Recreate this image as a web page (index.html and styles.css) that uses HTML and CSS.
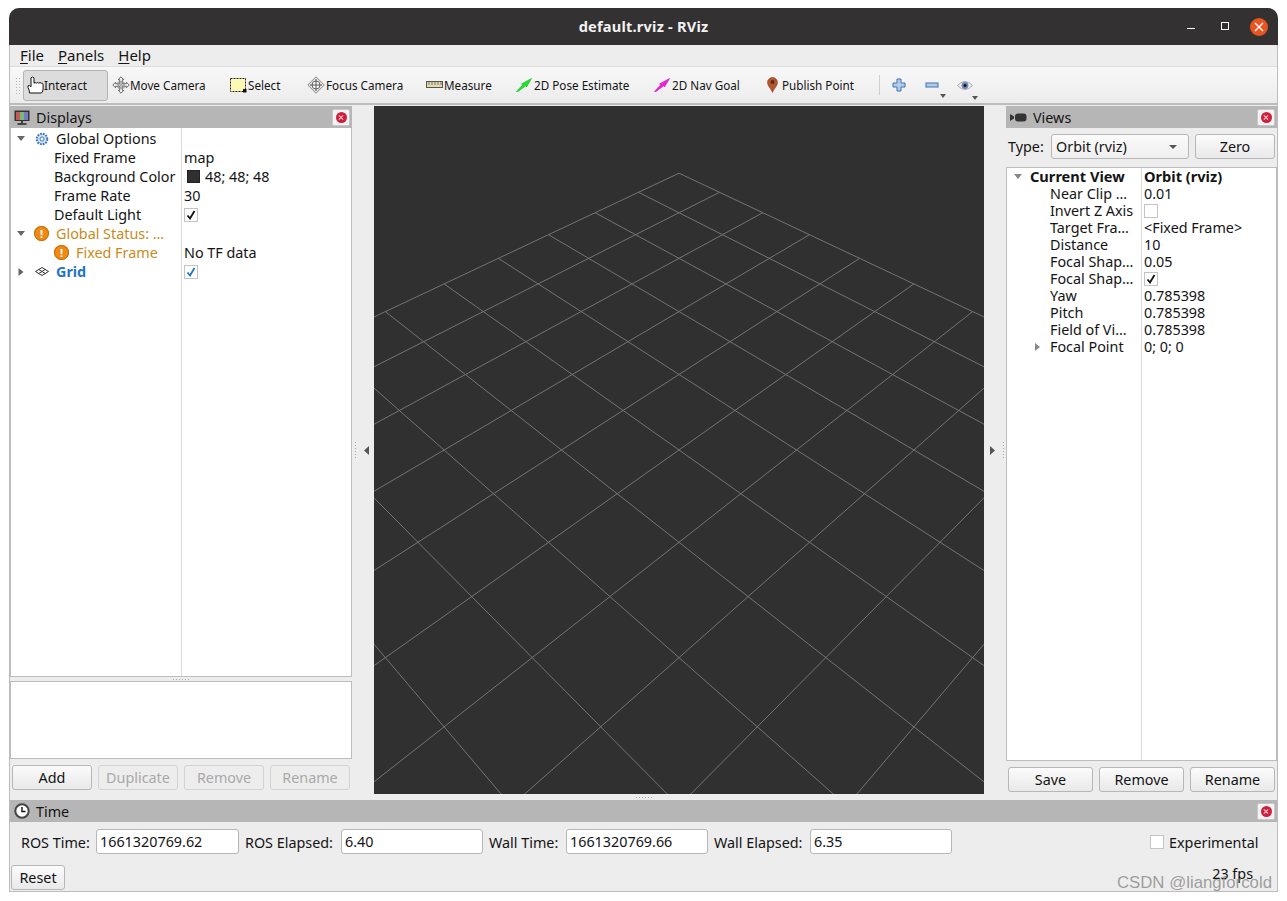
FILE: index.html
```html
<!DOCTYPE html>
<html lang="en">
<head>
<meta charset="utf-8">
<title>default.rviz - RViz</title>
<link rel="stylesheet" href="styles.css">
</head>
<body>
<div class="window">
  <header class="titlebar">
    <div class="title-side"></div>
    <div class="title">default.rviz - RViz</div>
    <div class="title-side controls">
      <span class="win-min"></span>
      <span class="win-max"></span>
      <span class="win-close"><svg width="10" height="10" viewBox="0 0 10 10"><path d="M1 1L9 9M9 1L1 9" stroke="#fff" stroke-width="1.4"/></svg></span>
    </div>
  </header>
  <nav class="menubar">
    <span class="menu"><u>F</u>ile</span>
    <span class="menu"><u>P</u>anels</span>
    <span class="menu"><u>H</u>elp</span>
  </nav>
  <div class="toolbar">
    <span class="grip"></span>
    <div class="tools">
      <div class="tool active">
        <svg width="17" height="18" viewBox="0 0 17 18"><path d="M2.5 17Q2.6 14 1 11.5Q.2 9 2.6 9.6L4 10.8V1.8Q5.5 .2 7 1.8V7.2Q8.2 5.8 9.4 7.2Q10.6 5.8 11.8 7.2Q13 5.8 14.2 7.2Q15.9 6.6 16.1 8.6V13Q16 17 14 17Z" fill="#fff" stroke="#111" stroke-width="1"/></svg>
        <span>Interact</span>
      </div>
      <div class="tool">
        <svg width="18" height="18" viewBox="0 0 18 18"><path d="M9 .8L11.8 3.6H10.3V7.7H14.4V6.2L17.2 9L14.4 11.8V10.3H10.3V14.4H11.8L9 17.2L6.2 14.4H7.7V10.3H3.6V11.8L.8 9L3.6 6.2V7.7H7.7V3.6H6.2Z" fill="#f4f4f4" stroke="#666" stroke-width="1"/><path d="M6 6H12V12H6ZM9 5V13M5 9H13" fill="none" stroke="#999" stroke-width="1"/></svg>
        <span>Move Camera</span>
      </div>
      <div class="tool">
        <svg width="17" height="15" viewBox="0 0 17 15"><rect x="0.5" y="0.5" width="15" height="13" fill="#fdf8b4" stroke="#222" stroke-dasharray="2 1"/><rect x="13" y="11" width="3.5" height="3.5" fill="#111"/></svg>
        <span>Select</span>
      </div>
      <div class="tool">
        <svg width="18" height="18" viewBox="0 0 18 18"><path d="M9 .8L17.2 9L9 17.2L.8 9Z" fill="#e6e6e6" stroke="#888"/><circle cx="9" cy="9" r="4" fill="#fff" stroke="#666"/><path d="M9 3V15M3 9H15" stroke="#555"/></svg>
        <span>Focus Camera</span>
      </div>
      <div class="tool">
        <svg width="17" height="8" viewBox="0 0 17 8"><rect x="0.5" y="0.5" width="16" height="6" fill="#e4dca6" stroke="#555"/><path d="M3 1V4M6 1V4M9 1V4M12 1V4M15 1V4" stroke="#777"/></svg>
        <span>Measure</span>
      </div>
      <div class="tool tool-gap">
        <svg width="16" height="14" viewBox="0 0 16 14"><path d="M0.5 13.5L7 6.5L5.5 6L15.5 0.5L10.5 9L10 7.5L2 13.5Z" fill="#1fe52a" stroke="#0fb81f" stroke-width="0.6"/></svg>
        <span>2D Pose Estimate</span>
      </div>
      <div class="tool tool-gap">
        <svg width="16" height="14" viewBox="0 0 16 14"><path d="M0.5 13.5L7 6.5L5.5 6L15.5 0.5L10.5 9L10 7.5L2 13.5Z" fill="#f01fe0" stroke="#c810b8" stroke-width="0.6"/></svg>
        <span>2D Nav Goal</span>
      </div>
      <div class="tool tool-pin">
        <svg width="11" height="16" viewBox="0 0 11 16"><path d="M5.5 15.5C4 11.5 0.5 9 0.5 5.5A5 5 0 0 1 10.5 5.5C10.5 9 7 11.5 5.5 15.5Z" fill="#b4552f" stroke="#8a4a2a" stroke-width="0.6"/><circle cx="5.5" cy="5" r="1.9" fill="#5a2a16"/></svg>
        <span>Publish Point</span>
      </div>
    </div>
    <span class="tool-sep"></span>
    <svg class="tb-plus" width="14" height="14" viewBox="0 0 14 14"><path d="M5 1H9V5H13V9H9V13H5V9H1V5H5Z" fill="#b3cbe8" stroke="#3f72b0"/></svg>
    <span class="tb-drop tb-minus">
      <svg width="14" height="6" viewBox="0 0 14 6"><rect x="1" y="1" width="12" height="4" fill="#b3cbe8" stroke="#3f72b0"/></svg>
      <i class="drop-tri"></i>
    </span>
    <span class="tb-drop tb-eye">
      <svg width="16" height="11" viewBox="0 0 16 11"><path d="M0.5 5.5Q8 -2.5 15.5 5.5Q8 13.5 0.5 5.5Z" fill="#eceff4" stroke="#aaa"/><circle cx="8" cy="5.5" r="3.4" fill="#6d84bb"/><circle cx="8" cy="5.5" r="1.5" fill="#111"/></svg>
      <i class="drop-tri"></i>
    </span>
  </div>

  <main class="workspace">
    <section class="dock displays">
      <div class="dock-head">
        <svg width="16" height="15" viewBox="0 0 16 15"><rect x="0.5" y="0.5" width="15" height="10.5" fill="#333"/><rect x="2" y="2" width="4" height="8" fill="#c45a5a"/><rect x="6" y="2" width="4" height="8" fill="#78b878"/><rect x="10" y="2" width="4" height="8" fill="#7a78c0"/><path d="M8 11V13M3.5 14H12.5" stroke="#222" stroke-width="1.6"/></svg>
        <span class="dock-title">Displays</span>
        <span class="dock-close"><i></i></span>
      </div>
      <div class="tree tree-displays">
        <div class="row"><div class="name top"><svg class="arr" width="8" height="5" viewBox="0 0 8 5"><path d="M0 0H8L4 5Z" fill="#666"/></svg>
          <svg class="ico" width="14" height="14" viewBox="0 0 14 14"><circle cx="7" cy="7" r="5.3" fill="#cfe0f4" stroke="#3f78c0" stroke-width="2" stroke-dasharray="1.8 1"/><circle cx="7" cy="7" r="2" fill="#fff" stroke="#3f78c0"/></svg>
          <span>Global Options</span></div><div class="val"></div></div>
        <div class="row"><div class="name child">Fixed Frame</div><div class="val">map</div></div>
        <div class="row"><div class="name child">Background Color</div><div class="val"><i class="swatch"></i>48; 48; 48</div></div>
        <div class="row"><div class="name child">Frame Rate</div><div class="val">30</div></div>
        <div class="row"><div class="name child">Default Light</div><div class="val"><span class="check on"><svg width="10" height="10" viewBox="0 0 10 10"><path d="M1.5 5.5L4 8.5L8.5 1"/></svg></span></div></div>
        <div class="row warn"><div class="name top"><svg class="arr" width="8" height="5" viewBox="0 0 8 5"><path d="M0 0H8L4 5Z" fill="#666"/></svg>
          <span class="warn-ico">!</span>
          <span>Global Status: …</span></div><div class="val"></div></div>
        <div class="row"><div class="name warn-child"><span class="warn-ico">!</span><span class="warn-text">Fixed Frame</span></div><div class="val">No TF data</div></div>
        <div class="row"><div class="name top"><svg class="arr" width="5" height="8" viewBox="0 0 5 8"><path d="M0 0V8L5 4Z" fill="#666"/></svg>
          <svg class="ico ico-grid" width="14" height="9" viewBox="0 0 14 9"><path d="M7 .5L13.5 4.5L7 8.5L.5 4.5ZM3.8 2.5L10.2 6.5M10.2 2.5L3.8 6.5" fill="none" stroke="#333"/></svg>
          <span class="grid-name">Grid</span></div><div class="val"><span class="check on blue"><svg width="10" height="10" viewBox="0 0 10 10"><path d="M1.5 5.5L4 8.5L8.5 1"/></svg></span></div></div>
      </div>
      <div class="split"><i class="dots-h"></i></div>
      <div class="desc"></div>
      <div class="btns btns-left">
        <button class="btn">Add</button>
        <button class="btn off">Duplicate</button>
        <button class="btn off">Remove</button>
        <button class="btn off">Rename</button>
      </div>
    </section>

    <div class="gutter gutter-l"><i class="dots-v"></i><svg width="5" height="9" viewBox="0 0 5 9"><path d="M5 0V9L0 4.5Z" fill="#555"/></svg></div>

    <section class="center">
      <svg class="scene" width="610" height="688" viewBox="374 106 610 688">
        <rect x="374" y="106" width="610" height="688" fill="#303030"/>
        <g stroke="#747474" stroke-width="1" fill="none">
          <path d="M679 173.2L91.7 450M719.5 192.3L122.6 493.7M762.9 212.7L157 542.3M809.5 234.7L195.3 596.6M859.7 258.3L238.5 657.6M913.9 283.9L287.5 726.8M972.7 311.6L343.4 805.9M1036.5 341.7L407.9 897.2M1106.1 374.5L483.2 1003.7M1182.4 410.5L572.2 1129.5M1266.3 450L679 1280.5"/>
          <path d="M679 173.2L1266.3 450M638.5 192.3L1235.4 493.7M595.1 212.7L1201 542.3M548.5 234.7L1162.7 596.6M498.3 258.3L1119.5 657.6M444.1 283.9L1070.5 726.8M385.3 311.6L1014.6 805.9M321.5 341.7L950.1 897.2M251.9 374.5L874.8 1003.7M175.6 410.5L785.8 1129.5M91.7 450L679 1280.5"/>
        </g>
      </svg>
      <div class="split-center"><i class="dots-h"></i></div>
    </section>

    <div class="gutter gutter-r"><svg width="5" height="9" viewBox="0 0 5 9"><path d="M0 0V9L5 4.5Z" fill="#555"/></svg><i class="dots-v"></i></div>

    <section class="dock views">
      <div class="dock-head">
        <svg width="17" height="9" viewBox="0 0 17 9"><path d="M0 1L4 3.5V5.5L0 8Z" fill="#333"/><rect x="5" y="0.5" width="11.5" height="8" rx="3" fill="#333"/></svg>
        <span class="dock-title">Views</span>
        <span class="dock-close"><i></i></span>
      </div>
      <div class="type-row">
        <span class="type-label">Type:</span>
        <div class="combo"><span>Orbit (rviz)</span><i class="combo-tri"></i></div>
        <button class="btn zero">Zero</button>
      </div>
      <div class="tree tree-views">
        <div class="row"><div class="name vtop"><svg class="arr" width="8" height="5" viewBox="0 0 8 5"><path d="M0 0H8L4 5Z" fill="#888"/></svg><b>Current View</b></div><div class="val"><b>Orbit (rviz)</b></div></div>
        <div class="row"><div class="name vchild">Near Clip …</div><div class="val">0.01</div></div>
        <div class="row"><div class="name vchild">Invert Z Axis</div><div class="val"><span class="check"></span></div></div>
        <div class="row"><div class="name vchild">Target Fra…</div><div class="val">&lt;Fixed Frame&gt;</div></div>
        <div class="row"><div class="name vchild">Distance</div><div class="val">10</div></div>
        <div class="row"><div class="name vchild">Focal Shap…</div><div class="val">0.05</div></div>
        <div class="row"><div class="name vchild">Focal Shap…</div><div class="val"><span class="check on"><svg width="10" height="10" viewBox="0 0 10 10"><path d="M1.5 5.5L4 8.5L8.5 1"/></svg></span></div></div>
        <div class="row"><div class="name vchild">Yaw</div><div class="val">0.785398</div></div>
        <div class="row"><div class="name vchild">Pitch</div><div class="val">0.785398</div></div>
        <div class="row"><div class="name vchild">Field of Vi…</div><div class="val">0.785398</div></div>
        <div class="row"><div class="name vsub"><svg class="arr" width="5" height="8" viewBox="0 0 5 8"><path d="M0 0V8L5 4Z" fill="#888"/></svg>Focal Point</div><div class="val">0; 0; 0</div></div>
      </div>
      <div class="btns btns-right">
        <button class="btn">Save</button>
        <button class="btn">Remove</button>
        <button class="btn">Rename</button>
      </div>
    </section>
  </main>

  <section class="time">
    <div class="dock-head">
      <svg width="16" height="16" viewBox="0 0 16 16"><circle cx="8" cy="8" r="6.7" fill="#fff" stroke="#444" stroke-width="2"/><path d="M8 4V8.5H11.5" fill="none" stroke="#111" stroke-width="1.4"/></svg>
      <span class="dock-title">Time</span>
      <span class="dock-close"><i></i></span>
    </div>
    <div class="time-row">
      <label class="tlabel first">ROS Time:</label><div class="field">1661320769.62</div>
      <label class="tlabel">ROS Elapsed:</label><div class="field">6.40</div>
      <label class="tlabel">Wall Time:</label><div class="field">1661320769.66</div>
      <label class="tlabel">Wall Elapsed:</label><div class="field">6.35</div>
      <div class="experimental"><span class="check"></span><span>Experimental</span></div>
    </div>
    <div class="status-row">
      <button class="btn reset">Reset</button>
      <span class="fps">23 fps</span>
    </div>
  </section>
  <div class="watermark">CSDN @liangforcold</div>
</div>
</body>
</html>
```

FILE: styles.css
```css
* { box-sizing: border-box; }
html, body { margin: 0; padding: 0; background: #fff; }
body {
  padding: 8px 9px 0;
  width: 1287px;
  height: 901px;
  overflow: hidden;
  font-family: "Noto Sans", "Open Sans", sans-serif;
  font-size: 14.35px;
  color: #141414;
}
b { font-size: 14.6px; }
.window {
  position: relative;
  width: 1269px;
  height: 884px;
  background: #ededed;
  border: 1px solid #bdbdbd;
  border-top: 0;
  border-radius: 10px 10px 0 0;
  display: flex;
  flex-direction: column;
}

/* title bar */
.titlebar {
  height: 37px;
  margin: 0 -1px;
  flex: none;
  background: #333131;
  border-radius: 10px 10px 0 0;
  display: flex;
  align-items: center;
  color: #f2f2f2;
}
.title { font-weight: 700; font-size: 14.6px; letter-spacing: 0.2px; padding-bottom: 2px; }
.title-side { flex: 1 1 0; min-width: 0; }
.controls { display: flex; align-items: center; justify-content: flex-end; height: 100%; }
.win-min { width: 8px; height: 1px; background: #fff; margin-top: 3px; }
.win-max { width: 8px; height: 8px; border: 1px solid #fff; margin-left: 26px; margin-top: -1px; }
.win-close { width: 18px; height: 18px; border-radius: 50%; background: #e95420; margin: 0 10px 0 21px; display: flex; align-items: center; justify-content: center; }

/* menu */
.menubar {
  height: 22px;
  flex: none;
  display: flex;
  align-items: center;
  padding: 0 0 2px 10px;
  gap: 14px;
  font-size: 15px;
  background: #ededed;
  border-bottom: 1px solid #dcdcdc;
}
.menu u { text-underline-offset: 2px; }

/* toolbar */
.toolbar {
  height: 38px;
  flex: none;
  display: flex;
  align-items: center;
  position: relative;
  padding-left: 5px;
  background: linear-gradient(#f8f8f8, #ececec);
  border-bottom: 2px solid #bcbcbc;
  font-size: 11.7px;
}
.grip { width: 5px; height: 17px; margin-right: 3px; background-image: radial-gradient(#b4b4b4 0.6px, transparent 0.8px); background-size: 3px 3px; }
.tools { display: grid; grid-template-columns: 85px 118px 77px 119px 90px 138px 113px 112px; height: 31px; }
.tool { display: flex; align-items: center; gap: 0; padding-left: 3px; border: 1px solid transparent; border-radius: 3px; }
.tool.active { background: #dcdcdc; border-color: #b3b3b3; }
.tool svg { flex: none; }
.tool:nth-child(3), .tool:nth-child(4), .tool:nth-child(5) { gap: 1px; }
.tool-gap { gap: 2px; }
.tool-pin { gap: 4px; }
.tool-sep { width: 1px; height: 20px; background: #cfcfcf; margin-left: 4px; }
.tb-plus { margin-left: 12px; }
.tb-drop { position: relative; display: flex; align-items: center; }
.tb-minus { margin-left: 19px; }
.tb-eye { margin-left: 18px; }
.drop-tri { position: absolute; right: -7px; bottom: -10px; width: 0; height: 0; border: 3px solid transparent; border-top: 4px solid #555; border-bottom: 0; }
.tb-eye .drop-tri { right: -5px; bottom: -9px; }

/* workspace */
.workspace { height: 695px; flex: none; display: flex; padding-top: 1px; }
.dock { display: flex; flex-direction: column; flex: none; }
.displays { width: 342px; }
.views { width: 271px; }
.dock-head {
  height: 22px;
  flex: none;
  display: flex;
  align-items: center;
  background: #b6b6b6;
  padding: 0 2px 0 4px;
}
.dock-title { margin-left: 6px; flex: 1; }
.dock-close {
  width: 18px; height: 17px;
  border-radius: 2px;
  background: #f3f3f3;
  border: 1px solid #c8c8c8;
  display: flex; align-items: center; justify-content: center;
}
.dock-close i {
  width: 11px; height: 11px; border-radius: 50%;
  background: #cf1f3e;
  position: relative;
}
.dock-close i::before, .dock-close i::after {
  content: ""; position: absolute; left: 2.5px; top: 5px; width: 6px; height: 1px; background: #f5c8d0;
}
.dock-close i::before { transform: rotate(45deg); }
.dock-close i::after { transform: rotate(-45deg); }

/* trees */
.tree { background: #fff; border: 1px solid #bdbdbd; }
.tree-displays {
  height: 549px;
  border-top: 0;
  padding-top: 1px;
  background: #fff linear-gradient(#dcdcdc, #dcdcdc) 170px 0 / 1px 100% no-repeat;
}
.tree-displays .row { height: 19px; line-height: 19px; display: grid; grid-template-columns: 171px 1fr; align-items: center; }
.tree-displays .val { padding-left: 2px; display: flex; align-items: center; }
.name { display: flex; align-items: center; white-space: nowrap; position: relative; }
.arr { flex: none; }
.top { padding-left: 6px; }
.top .arr { margin-right: 0; width: 8px; }
.top .ico { margin-left: 10px; margin-right: 7px; }
.ico-grid { margin-right: 7px; }
.top .warn-ico { margin-left: 9px; margin-right: 7px; }
.child { padding-left: 43px; }
.warn-child { padding-left: 43px; }
.warn-child .warn-ico { margin-left: 0; margin-right: 7px; }
.warn-ico {
  width: 15px; height: 15px; border-radius: 50%;
  background: #ef8a14;
  box-shadow: inset 0 0 0 1px #c96f0a;
  color: #fff; font-weight: 700; font-size: 11px; line-height: 15px; text-align: center; flex: none;
}
.warn .name span:last-child, .warn-text { color: #c98a1b; }
.grid-name { color: #2673c8; font-weight: 700; }
.swatch { width: 13px; height: 13px; background: #303030; border: 1px solid #222; margin: 0 5px 0 3px; }
.check {
  width: 14px; height: 14px; border: 1px solid #c4c4c4; background: #fff;
  display: inline-flex; align-items: center; justify-content: center;
  color: #111;
}
.check path { fill: none; stroke: currentColor; stroke-width: 1.8; }
.check.blue { color: #2673c8; }

.split { height: 4px; flex: none; display: flex; justify-content: center; align-items: center; }
.dots-h { width: 16px; height: 1px; background-image: repeating-linear-gradient(90deg, #aaa 0 1px, transparent 1px 3px); }
.desc { height: 78px; flex: none; background: #fff; border: 1px solid #bdbdbd; }
.btns { display: flex; flex: none; margin-top: 6px; }
.btn {
  height: 25px;
  font: inherit;
  color: #141414;
  background: linear-gradient(#fbfbfb, #e9e9e9);
  border: 1px solid #b7b7b7;
  border-radius: 3px;
  padding: 0;
}
.btn.off { color: #a9a9a9; border-color: #d2d2d2; background: #ededed; }
.btns-left { gap: 6px; padding-left: 2px; }
.btns-left .btn { width: 80px; }
.btns-right { gap: 6px; padding-left: 2px; }
.btns-right .btn { width: 85px; }

.gutter { width: 22px; flex: none; display: flex; align-items: center; height: 688px; }
.gutter-l { padding-left: 3px; gap: 8px; }
.gutter-r { padding-left: 6px; gap: 8px; }
.dots-v { width: 1px; height: 17px; background-image: repeating-linear-gradient(#aaa 0 1px, transparent 1px 3px); }
.center { width: 610px; flex: none; display: flex; flex-direction: column; }
.scene { display: block; flex: none; }
.split-center { height: 6px; flex: none; display: flex; align-items: center; padding-left: 262px; }

.type-row { display: flex; align-items: center; height: 25px; margin-top: 6px; flex: none; padding-left: 2px; }
.type-label { width: 43px; }
.combo {
  width: 138px; height: 25px;
  background: linear-gradient(#fbfbfb, #eeeeee);
  border: 1px solid #b7b7b7;
  border-radius: 3px;
  display: flex; align-items: center; justify-content: space-between;
  padding: 0 11px 0 4px;
}
.combo-tri { width: 0; height: 0; border: 4px solid transparent; border-top: 4px solid #555; border-bottom: 0; }
.zero { width: 80px; margin-left: 6px; }

.tree-views {
  height: 594px;
  margin-top: 8px;
  background: #fff linear-gradient(#dcdcdc, #dcdcdc) 134px 0 / 1px 100% no-repeat;
}
.tree-views .row { height: 17px; line-height: 17px; display: grid; grid-template-columns: 135px 1fr; align-items: center; }
.tree-views .val { padding-left: 2px; display: flex; align-items: center; }
.vtop { padding-left: 7px; }
.vtop .arr { margin-right: 8px; }
.vchild { padding-left: 43px; }
.vsub { padding-left: 28px; }
.vsub .arr { margin-right: 10px; }

/* time */
.time { display: flex; flex-direction: column; flex: 1; }
.time-row {
  display: grid;
  grid-template-columns: 86px 143px 102px 142px 83px 142px 102px 142px 1fr;
  align-items: center;
  height: 25px;
  margin-top: 7px;
}
.tlabel { padding: 1px 0 0 6px; white-space: nowrap; }
.tlabel.first { padding-left: 11px; }
.field {
  height: 25px;
  background: #fff;
  border: 1px solid #b7b7b7;
  border-radius: 3px;
  padding-left: 3px;
  line-height: 23px;
}
.experimental { display: flex; align-items: center; gap: 5px; margin-left: 198px; padding-top: 1px; }
.status-row { display: flex; justify-content: space-between; align-items: center; margin-top: 11px; padding: 0 24px 0 1px; }
.reset { width: 54px; height: 25px; }
.fps { margin-top: -8px; }
.watermark {
  position: absolute;
  right: 5px;
  bottom: -2px;
  font-family: "Liberation Sans", sans-serif;
  font-size: 16.8px;
  color: rgba(130, 130, 130, 0.75);
  white-space: nowrap;
}
```
